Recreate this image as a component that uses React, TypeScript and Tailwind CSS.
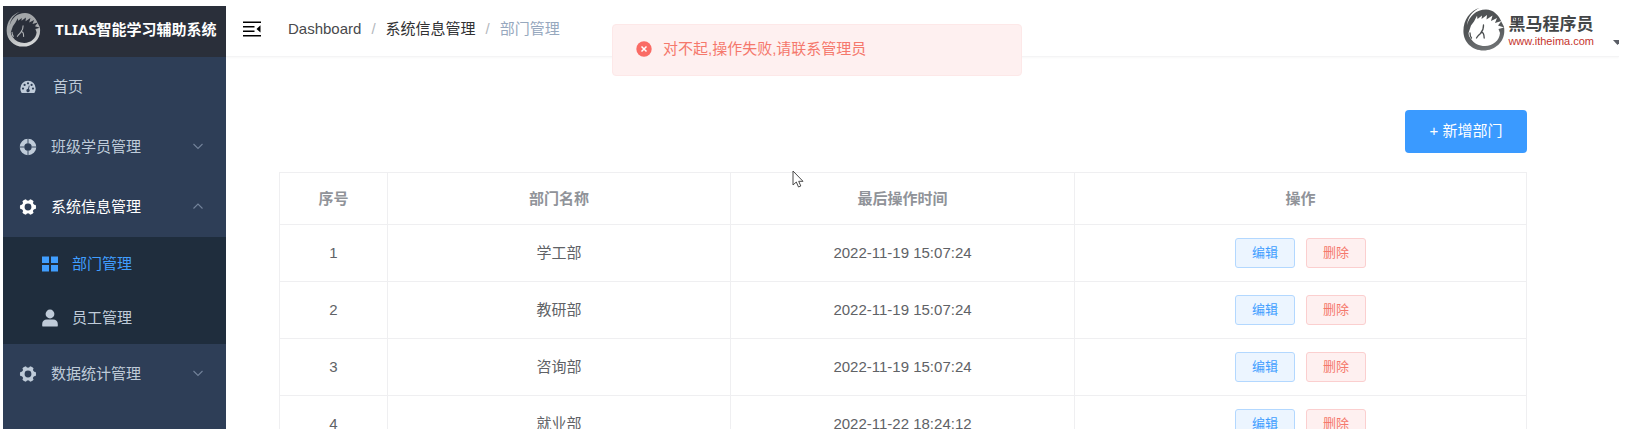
import { ReactNode } from "react";

const rows = [
  { id: 1, name: "学工部", time: "2022-11-19 15:07:24" },
  { id: 2, name: "教研部", time: "2022-11-19 15:07:24" },
  { id: 3, name: "咨询部", time: "2022-11-19 15:07:24" },
  { id: 4, name: "就业部", time: "2022-11-22 18:24:12" },
];

function HorseLogo({ id, from, to, face, line, className }: { id: string; from: string; to: string; face: string; line: string; className: string }) {
  return (
    <svg viewBox="0 0 42 44" className={className} aria-hidden="true">
      <defs>
        <linearGradient id={id} x1="0.2" y1="0" x2="0.5" y2="1">
          <stop offset="0" stopColor={from} />
          <stop offset="0.5" stopColor={from} />
          <stop offset="1" stopColor={to} />
        </linearGradient>
      </defs>
      <path
        d="M17 .8C7 3.500.4 13 .4 24 .4 35 9 43.500 20.500 43.500S41.300 35 41.300 24c0-1.500 0-3-.4-4.500L38.500 15C36 8 30 2.500 23 2.500 13 2.500 6.500 9 4 18 5 10 9.500 4 17 .8Z"
        fill={`url(#${id})`}
      />
      <path
        d="M5.500 26 8 18.500 11 14.500 14 8.800 14.500 12 19 8.500 18.500 12 24 8 23.500 12.500 29.500 8.500 28 14 34 11 32 16 38.500 14 35 18.500 41 20.500 35.500 22 37 26C36.500 33.500 30 39 22 39c-6 0-11-2.500-14-7l-2-3Z"
        fill={face}
      />
      <path
        d="M7 26c0 2 .3 3.500 1.500 5M20.500 18c.3 4-1 6-3 8.500-1.500 1.500-3 2.500-4 4.500M18 25.500c2-.5 3 1 3.200 5.500"
        fill="none"
        stroke={line}
        strokeWidth="1.300"
        strokeLinecap="round"
      />
    </svg>
  );
}

function GaugeIcon() {
  return (
    <svg viewBox="0 0 16 14" className="h-[14px] w-4 shrink-0" fill="currentColor" aria-hidden="true">
      <path
        fillRule="evenodd"
        d="M8 .8a7.700 7.700 0 0 0-7.700 7.700c0 1.600.4 3 1.200 4.200.2.300.4.300.6.300h11.800c.2 0 .4 0 .6-.3.800-1.200 1.200-2.600 1.200-4.200A7.700 7.700 0 0 0 8 .8ZM3 7.500a1.100 1.100 0 1 1 0 2.200 1.100 1.100 0 0 1 0-2.200Zm1.600-3.700a1.100 1.100 0 1 1 0 2.200 1.100 1.100 0 0 1 0-2.200ZM8 2.200a1.100 1.100 0 1 1 0 2.200 1.100 1.100 0 0 1 0-2.200Zm3.600 1.600a1.100 1.100 0 1 1 0 2.200 1.100 1.100 0 0 1 0-2.200ZM13 7.500a1.100 1.100 0 1 1 0 2.200 1.100 1.100 0 0 1 0-2.200ZM8.900 5.500l.8.200-.8 3.300a1.700 1.700 0 1 1-.9-.2Z"
      />
    </svg>
  );
}

function HelpIcon() {
  return (
    <svg viewBox="0 0 18 18" className="size-[18px] shrink-0" fill="none" aria-hidden="true">
      <circle cx="9" cy="9" r="6" stroke="currentColor" strokeWidth="4.600" />
      <path d="M9 0v5.500M9 12.500V18M0 9h5.500M12.500 9H18" stroke="#2e3e57" strokeWidth="0.900" />
    </svg>
  );
}

function GearIcon() {
  const angles = [0, 60, 120, 180, 240, 300];
  return (
    <svg viewBox="0 0 18 18" className="size-[18px] shrink-0" fill="currentColor" aria-hidden="true">
      <circle cx="9" cy="9" r="4.900" fill="none" stroke="currentColor" strokeWidth="3" />
      {angles.map((angle) => (
        <path key={angle} d="M13.500 6.500 16.700 7q.8 2 0 4l-3.200.5Z" transform={`rotate(${angle} 9 9)`} />
      ))}
    </svg>
  );
}

function GridIcon() {
  return (
    <svg viewBox="0 0 16 16" className="size-4 shrink-0" fill="currentColor" aria-hidden="true">
      <path d="M0 .5h7v6.500H0ZM9 .5h7v6.500H9ZM0 9h7v6.500H0ZM9 9h7v6.500H9Z" />
    </svg>
  );
}

function UserIcon() {
  return (
    <svg viewBox="0 0 16 18" className="h-[18px] w-4 shrink-0" fill="currentColor" aria-hidden="true">
      <circle cx="8" cy="5" r="4.400" />
      <path d="M.2 17v-2c0-3 2-4.600 4.500-4.600h6.600c2.500 0 4.500 1.600 4.500 4.600v2c0 .3-.2.500-.5.500H.7c-.3 0-.5-.2-.5-.5Z" />
    </svg>
  );
}

function Chevron({ up = false }: { up?: boolean }) {
  return (
    <svg viewBox="0 0 12 12" className="mr-[22px] ml-auto size-3" fill="none" stroke="#73839a" strokeWidth="1.100" aria-hidden="true">
      <path d={up ? "M1.500 7.500 6 3l4.500 4.500" : "M1.500 3 6 7.500 10.500 3"} />
    </svg>
  );
}

function MenuGroup({ icon, label, open = false }: { icon: ReactNode; label: string; open?: boolean }) {
  return (
    <button
      type="button"
      aria-expanded={open}
      className={`flex h-[60px] w-full items-center gap-[14px] pl-4 text-left ${open ? "text-white" : "text-[#bfcbd9]"}`}
    >
      {icon}
      <span>{label}</span>
      <Chevron up={open} />
    </button>
  );
}

function Sidebar() {
  return (
    <aside className="w-[223px] shrink-0 bg-[#2e3e57]">
      <div className="flex h-[51px] items-center gap-[14px] bg-[#2a2f3a] pb-[5px] pl-[3px] text-white">
        <HorseLogo id="ring-light" from="#a3a6a9" to="#d6d8d9" face="#2a2f3a" line="#b4b7ba" className="h-[36px] w-[35px] shrink-0" />
        <h1 className="font-['Noto_Sans','Noto_Sans_CJK_SC',sans-serif] font-bold whitespace-nowrap">TLIAS智能学习辅助系统</h1>
      </div>
      <nav>
        <a href="#home" className="flex h-[60px] items-center gap-[17px] pl-[17px] text-[#bfcbd9]">
          <GaugeIcon />
          <span>首页</span>
        </a>
        <MenuGroup icon={<HelpIcon />} label="班级学员管理" />
        <MenuGroup icon={<GearIcon />} label="系统信息管理" open />
        <div className="bg-[#1f2d3d]">
          <a href="#departments" aria-current="page" className="flex h-[54px] items-center gap-[14px] pl-[39px] text-[#409eff]">
            <GridIcon />
            <span>部门管理</span>
          </a>
          <a href="#staff" className="flex h-[53px] items-center gap-[14px] pl-[39px] text-[#bfcbd9]">
            <UserIcon />
            <span>员工管理</span>
          </a>
        </div>
        <MenuGroup icon={<GearIcon />} label="数据统计管理" />
      </nav>
    </aside>
  );
}

function TopBar() {
  return (
    <header className="flex h-[51px] items-center border-b border-[#f4f4f5] pb-1 pl-[17px] shadow-[0_1px_2px_rgba(0,21,41,0.03)]">
      <button type="button" aria-label="收起菜单" className="mr-[27px] text-black">
        <svg viewBox="0 0 18 16" className="block h-4 w-[18px]" fill="currentColor" aria-hidden="true">
          <path d="M0 .5h18v1.500H0ZM0 5h11.500v1.500H0ZM0 9.500h11.500V11H0ZM0 14h18v1.500H0ZM17.500 4.300v7.200L13.500 7.900Z" />
        </svg>
      </button>
      <nav aria-label="面包屑">
        <ol className="flex gap-[10px] whitespace-nowrap text-[#303133]">
          <li><a href="#dashboard" className="text-[#48494c]">Dashboard</a></li>
          <li aria-hidden="true" className="text-[#b4b7bd]">/</li>
          <li><a href="#system">系统信息管理</a></li>
          <li aria-hidden="true" className="text-[#b4b7bd]">/</li>
          <li aria-current="page" className="text-[#97a8be]">部门管理</li>
        </ol>
      </nav>
      <div className="ml-auto flex items-center">
        <HorseLogo id="ring-dark" from="#505355" to="#6f7274" face="#ffffff" line="#4b4e50" className="h-[44px] w-[42px]" />
        <div className="mt-1 ml-[3px] flex flex-col whitespace-nowrap">
          <span className="text-[17px] leading-5 font-bold text-[#434648]">黑马程序员</span>
          <span className="text-[11px] leading-3 font-medium text-[#c5332c]">www.itheima.com</span>
        </div>
        <button type="button" aria-label="用户菜单" className="mt-[27px] ml-[19px] w-[6px] overflow-hidden text-[#5a5e66]">
          <svg viewBox="0 0 9 5" className="block h-[5px] w-[9px] max-w-none" fill="currentColor" aria-hidden="true">
            <path d="M0 0h9L4.500 5Z" />
          </svg>
        </button>
      </div>
    </header>
  );
}

function DepartmentTable() {
  const cell = "border border-[#efeff1]";
  return (
    <table className="mt-[19px] w-full table-fixed border-collapse text-center text-[#606266]">
      <colgroup>
        <col className="w-[8.660%]" />
        <col className="w-[27.500%]" />
        <col className="w-[27.600%]" />
        <col />
      </colgroup>
      <thead>
        <tr className="h-[52px] text-[#909399]">
          <th className={cell}>序号</th>
          <th className={cell}>部门名称</th>
          <th className={cell}>最后操作时间</th>
          <th className={cell}>操作</th>
        </tr>
      </thead>
      <tbody>
        {rows.map((row) => (
          <tr key={row.id} className="h-[57px]">
            <td className={cell}>{row.id}</td>
            <td className={cell}>{row.name}</td>
            <td className={cell}>{row.time}</td>
            <td className={cell}>
              <div className="flex justify-center gap-[11px] text-[13px]">
                <button type="button" className="h-[30px] w-[60px] rounded-[3px] border border-[#b3d8ff] bg-[#ecf5ff] text-[#409eff]">编辑</button>
                <button type="button" className="h-[30px] w-[60px] rounded-[3px] border border-[#fbcfcf] bg-[#fef0f0] text-[#f5786c]">删除</button>
              </div>
            </td>
          </tr>
        ))}
      </tbody>
    </table>
  );
}

function ErrorToast() {
  return (
    <div role="alert" className="absolute top-6 left-1/2 ml-0.5 flex h-[52px] w-[410px] -translate-x-1/2 items-center gap-[11px] rounded border border-[#fde8e8] bg-[#fef0f0] pb-0.5 pl-[23px] text-[#f5786c]">
      <svg viewBox="0 0 16 16" className="size-4" aria-hidden="true">
        <circle cx="8" cy="8" r="7.700" fill="#fa6b65" />
        <path d="m5.500 5.500 5 5m0-5-5 5" stroke="#fff" strokeWidth="1.500" />
      </svg>
      <p>对不起,操作失败,请联系管理员</p>
    </div>
  );
}

function Pointer() {
  return (
    <svg viewBox="0 0 12 18" className="pointer-events-none absolute top-[170px] left-[792px] h-[18px] w-3" aria-hidden="true">
      <path d="M1 1v14l3.300-3 2.200 5 2.300-1-2.100-4.700H11Z" fill="#fff" stroke="#4a4a4a" strokeWidth="1" />
    </svg>
  );
}

export default function App() {
  return (
    <div className="relative h-screen overflow-hidden bg-white pt-1.5 pr-[11px] pb-[9px] pl-[3px] font-['Liberation_Sans','Noto_Sans_CJK_SC',sans-serif] text-[15px] leading-[22px]">
      <div className="flex h-full overflow-hidden">
        <Sidebar />
        <div className="min-w-0 flex-1">
          <TopBar />
          <main className="pt-[53px] pr-[92px] pl-[53px]">
            <div className="flex justify-end">
              <button type="button" className="h-[43px] w-[122px] rounded bg-[#3a9aff] pb-0.5 text-white">+ 新增部门</button>
            </div>
            <DepartmentTable />
          </main>
        </div>
      </div>
      <ErrorToast />
      <Pointer />
    </div>
  );
}
